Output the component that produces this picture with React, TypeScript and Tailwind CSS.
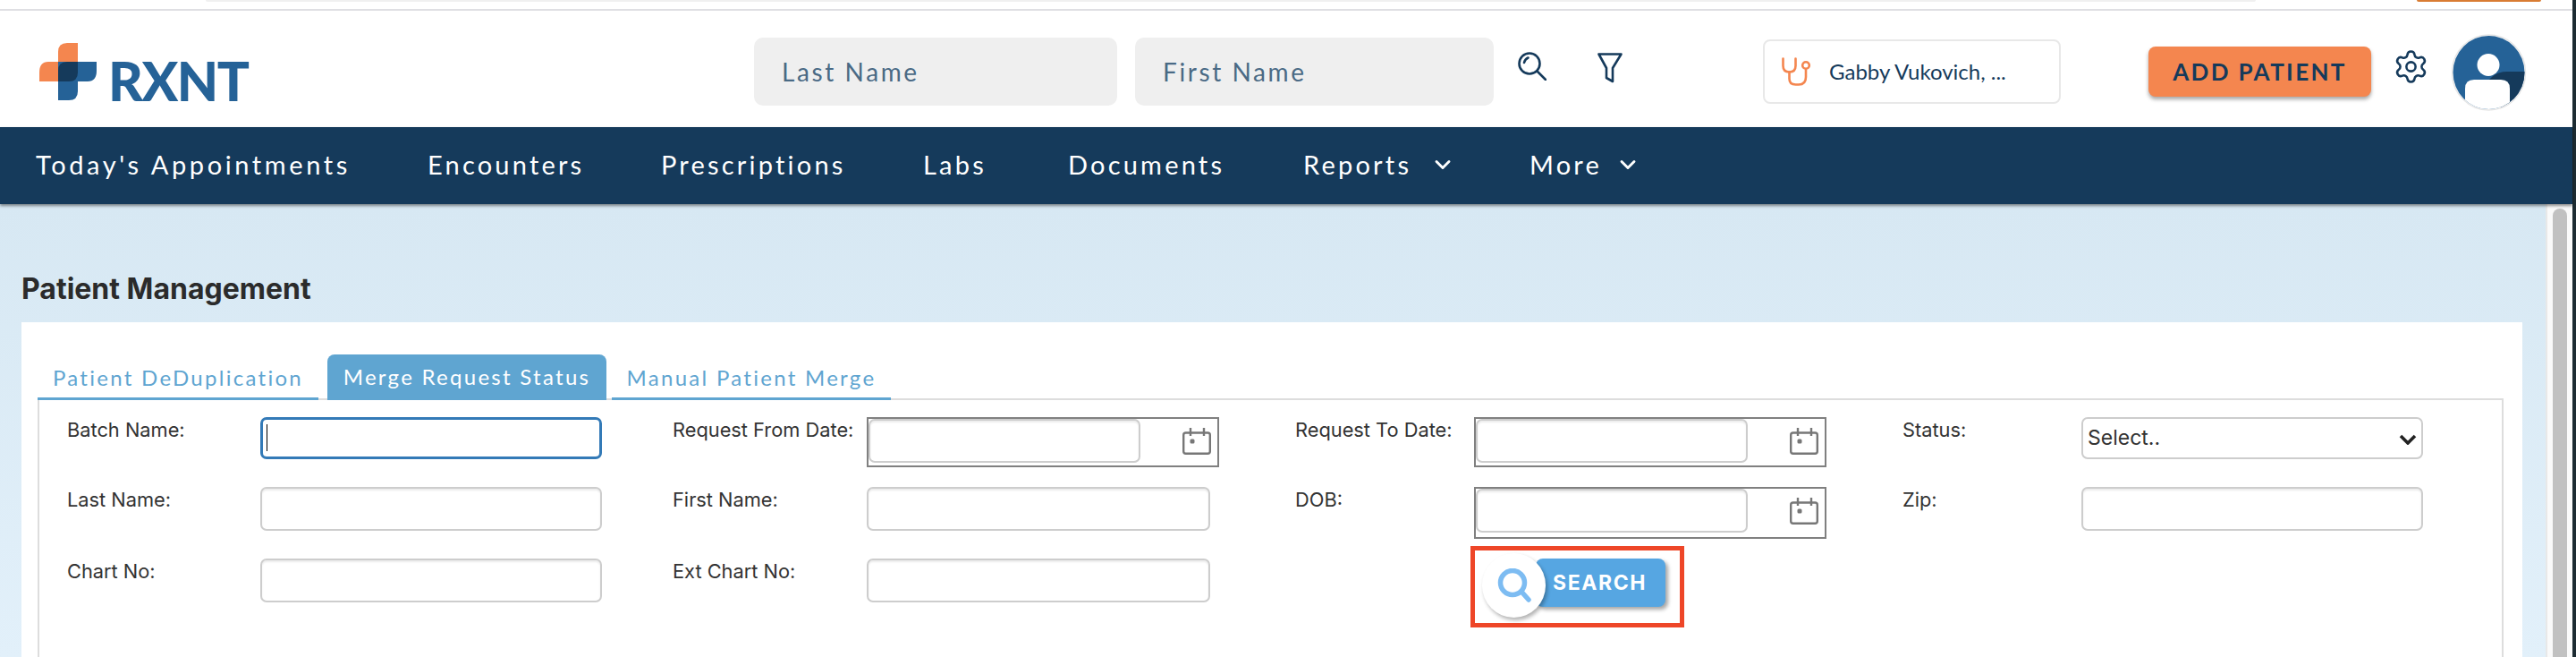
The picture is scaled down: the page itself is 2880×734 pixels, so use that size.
import { Settings, ChevronDown } from "lucide-react";

const navItems = [
    { label: "Today's Appointments", width: "w-[438px]" },
    { label: "Encounters", width: "w-[261px]" },
    { label: "Prescriptions", width: "w-[293px]" },
    { label: "Labs", width: "w-[162px]" },
    { label: "Documents", width: "w-[263px]" },
];

const inputClass =
    "h-[49px] w-full rounded-[7px] border-2 border-[#cdcdcd] bg-white shadow-[inset_0_2px_2px_rgba(0,0,0,0.08)] outline-none";

const Label = ({ text }: { text: string }) => (
    <div className="font-['Inter',sans-serif] text-[21.8px] leading-[29px] text-[#333]">{text}</div>
);

const TextField = ({ width, name }: { width: string; name: string }) => (
    <div className={width}>
        <input aria-label={name} type="text" className={inputClass} />
    </div>
);

const CalendarIcon = () => (
    <svg width="32" height="30" viewBox="0 0 32 30" fill="none" stroke="#777" strokeWidth="2.4" className="mt-[10px] ml-[47px] shrink-0">
        <rect x="1.2" y="5.5" width="29.6" height="23.3" rx="2.5" />
        <path d="M9 0v9M24 0v9" />
        <rect x="8.5" y="12.5" width="5" height="5" rx="1.5" fill="#777" stroke="none" />
    </svg>
);

const DateField = ({ height, name }: { height: string; name: string }) => (
    <div className={`flex w-[394px] items-start border-2 border-[#808080] ${height}`}>
        <input
            aria-label={name}
            type="text"
            className="h-[49px] w-[304px] rounded-[7px] border-2 border-[#cdcdcd] bg-white shadow-[inset_0_2px_2px_rgba(0,0,0,0.08)] outline-none"
        />
        <CalendarIcon />
    </div>
);

const Logo = () => (
    <div className="mt-[36px] ml-[44px] flex h-[64px] w-[236px] shrink-0 items-end">
        <svg width="64" height="64" viewBox="0 0 64 64" className="shrink-0">
            <path d="M43 0V43H0V33Q0 21 10 21H21V10Q21 0 31 0Z" fill="#f4864f" />
            <path d="M21 21H64V31Q64 43 54 43H43V54Q43 64 33 64H21Z" fill="#256297" />
            <path d="M31 21H43V33Q43 43 33 43H21V31Q21 21 31 21Z" fill="#153a5b" />
        </svg>
        <span className="ml-[13px] h-[43px] font-['Lato',sans-serif] text-[60px] leading-[43px] font-black tracking-[-1.5px] text-[#256297]">RXNT</span>
    </div>
);

const Avatar = () => (
    <svg width="84" height="86" viewBox="0 0 84 86" className="mt-[26px] ml-[25px] shrink-0">
        <defs>
            <clipPath id="avatar-clip">
                <ellipse cx="41.5" cy="43" rx="40" ry="41" />
            </clipPath>
        </defs>
        <ellipse cx="41.5" cy="43" rx="41" ry="42" fill="#fff" stroke="#e6e6e6" strokeWidth="1.5" />
        <g clipPath="url(#avatar-clip)">
            <rect width="84" height="86" fill="#256297" />
            <path d="M42 51Q50 42 62 42H84V90H56Z" fill="#153a5b" />
            <circle cx="41" cy="34.5" r="12.5" fill="#fff" />
            <path d="M15 90V61Q15 51 25 51H55Q65 51 65 61V90Z" fill="#fff" />
        </g>
    </svg>
);

const Header = () => (
    <div className="flex h-[130px] items-start bg-white">
        <Logo />
        <input
            aria-label="Last Name"
            placeholder="Last Name"
            className="mt-[30px] ml-[563px] h-[76px] w-[406px] rounded-[10px] bg-[#efefef] pl-[31px] font-['Lato',sans-serif] text-[28px] tracking-[2.6px] text-[#4a6a85] outline-none placeholder:text-[#4a6a85]"
        />
        <input
            aria-label="First Name"
            placeholder="First Name"
            className="mt-[30px] ml-[20px] h-[76px] w-[401px] rounded-[10px] bg-[#efefef] pl-[31px] font-['Lato',sans-serif] text-[28px] tracking-[2.6px] text-[#4a6a85] outline-none placeholder:text-[#4a6a85]"
        />
        <svg width="32" height="32" viewBox="0 0 32 32" fill="none" stroke="#153a5b" strokeWidth="2.6" strokeLinecap="round" className="mt-[46px] ml-[27px] shrink-0">
            <circle cx="13" cy="13" r="11.5" />
            <path d="M21.5 21.5L31 31" />
            <path d="M7 12Q8 8 11.5 6.5" />
        </svg>
        <svg width="28" height="34" viewBox="0 0 28 34" fill="none" stroke="#153a5b" strokeWidth="2.6" strokeLinejoin="round" className="mt-[47px] ml-[57px] shrink-0">
            <path d="M1.5 1.5H26.5L17 17V32L10 28V17Z" />
        </svg>
        <div className="mt-[32px] ml-[157px] flex h-[72px] w-[333px] shrink-0 items-center rounded-[8px] border-2 border-[#e8e8e8] bg-white pl-[19px]">
            <svg width="32" height="32" viewBox="0 0 32 32" fill="none" stroke="#f4864f" strokeWidth="2.6" strokeLinecap="round" className="shrink-0">
                <path d="M1.5 1.5V9.5Q1.5 16.5 8.5 16.5T15.5 9.5V1.5" />
                <path d="M8.5 16.5V24Q8.5 30.5 15.5 30.5H19Q27 30.5 27 22V14" />
                <circle cx="27" cy="9" r="3.8" />
            </svg>
            <span className="ml-[21px] font-['Lato',sans-serif] text-[24px] text-[#153a5b]">Gabby Vukovich, ...</span>
        </div>
        <button className="mt-[40px] ml-[98px] h-[56px] w-[249px] shrink-0 rounded-[8px] bg-[#f4864f] font-['Lato',sans-serif] text-[26px] font-bold tracking-[0.09em] text-[#153a5b] shadow-[0_3px_4px_rgba(0,0,0,0.35)]">
            ADD PATIENT
        </button>
        <Settings size={41} strokeWidth={1.5} color="#153a5b" className="mt-[42px] ml-[24px] shrink-0" />
        <Avatar />
    </div>
);

const Nav = () => (
    <div className="flex h-[86px] items-center bg-[#153a5b] pb-[2px] pl-[40px] font-['Lato',sans-serif] text-[29px] tracking-[3.2px] text-white shadow-[0_2px_3px_rgba(0,0,0,0.45)]">
        {navItems.map((item, i) => (
            <div key={item.label} className={`${item.width} shrink-0 ${i === 0 ? "tracking-[3.6px]" : ""}`}>
                {item.label}
            </div>
        ))}
        <div className="flex w-[253px] shrink-0 items-center">
            Reports
            <ChevronDown size={28} strokeWidth={2.5} className="ml-[21px]" />
        </div>
        <div className="flex items-center">
            More
            <ChevronDown size={28} strokeWidth={2.5} className="ml-[15px]" />
        </div>
    </div>
);

const Tabs = () => (
    <div className="flex h-[51px] items-end border-b-2 border-[#ddd] font-['Lato',sans-serif] text-[24px] tracking-[0.095em]">
        <div className="-mb-[2px] flex h-[51px] w-[314px] items-center justify-center border-b-[3px] border-[#5fa5d1] pt-[4px] text-[#5fa5d1]">
            Patient DeDuplication
        </div>
        <div className="-mb-[2px] ml-[10px] flex h-[51px] w-[312px] items-center justify-center rounded-t-[8px] bg-[#5fa5d1] pb-[2px] text-white">
            Merge Request Status
        </div>
        <div className="-mb-[2px] ml-[6px] flex h-[51px] w-[312px] items-center justify-center border-b-[3px] border-[#5fa5d1] pt-[4px] text-[#5fa5d1]">
            Manual Patient Merge
        </div>
    </div>
);

const SearchButton = () => (
    <button className="-mt-[14px] -ml-[4px] flex h-[91px] w-[239px] items-start border-[5px] border-[#ee4628] bg-white pl-[8px]">
        <div className="z-10 mt-[3px] flex h-[72px] w-[71px] shrink-0 items-center justify-center rounded-full bg-white shadow-[2px_3px_4px_rgba(0,0,0,0.3)]">
            <svg width="38" height="38" viewBox="0 0 38 38" fill="none" stroke="#7dbcf2" strokeWidth="5.5" strokeLinecap="round">
                <circle cx="17" cy="16" r="13.5" />
                <path d="M27 26L35 35" />
            </svg>
        </div>
        <div className="-ml-[11px] mt-[9px] flex h-[54px] w-[145px] shrink-0 items-center rounded-[8px] bg-[#56a6e2] pl-[19px] font-['Inter',sans-serif] text-[23px] font-bold tracking-[0.07em] text-white shadow-[3px_3px_4px_rgba(0,0,0,0.35)]">
            SEARCH
        </div>
    </button>
);

const StatusSelect = () => (
    <div className="relative w-[382px]">
        <select
            aria-label="Status"
            className="h-[47px] w-full appearance-none rounded-[7px] border-2 border-[#cdcdcd] bg-white pl-[5px] font-['Inter',sans-serif] text-[23px] text-[#333] outline-none"
        >
            <option>Select..</option>
        </select>
        <svg width="20" height="12" viewBox="0 0 20 12" fill="none" stroke="#222" strokeWidth="3.6" className="absolute top-[19px] right-[7px]">
            <path d="M2 2L10 10L18 2" />
        </svg>
    </div>
);

const SearchForm = () => (
    <div className="grid h-[300px] grid-cols-[216px_461px_217px_479px_200px_479px_200px_382px] grid-rows-[78px_80px_100px] border-x-2 border-[#ddd] pt-[19px] pl-[31px]">
        <Label text="Batch Name:" />
        <div className="relative w-[382px]">
            <input
                aria-label="Batch Name"
                type="text"
                className="h-[47px] w-full rounded-[7px] border-[3px] border-[#337ab7] bg-white outline-none"
            />
            <span className="absolute top-[8px] left-[7px] h-[30px] w-[1px] bg-black" />
        </div>
        <Label text="Request From Date:" />
        <DateField height="h-[56px]" name="Request From Date" />
        <Label text="Request To Date:" />
        <DateField height="h-[56px]" name="Request To Date" />
        <Label text="Status:" />
        <StatusSelect />

        <Label text="Last Name:" />
        <TextField width="w-[382px]" name="Last Name" />
        <Label text="First Name:" />
        <TextField width="w-[384px]" name="First Name" />
        <Label text="DOB:" />
        <DateField height="h-[58px]" name="DOB" />
        <Label text="Zip:" />
        <TextField width="w-[382px]" name="Zip" />

        <Label text="Chart No:" />
        <TextField width="w-[382px]" name="Chart No" />
        <Label text="Ext Chart No:" />
        <TextField width="w-[384px]" name="Ext Chart No" />
        <div />
        <SearchButton />
    </div>
);

const App = () => {
    return (
        <div className="flex h-[734px] w-[2880px] overflow-hidden bg-[#1d2c33]">
            <div className="flex w-[2876px] flex-col">
                <div className="h-[12px] shrink-0 border-b-2 border-[#dfdfe3] bg-white pl-[230px]">
                    <div className="flex">
                        <div className="h-[2px] w-[2292px] rounded-b bg-[#f0f0f0]" />
                        <div className="ml-[180px] h-[2px] w-[139px] rounded-b bg-[#d97c33]" />
                    </div>
                </div>
                <Header />
                <div className="z-10">
                    <Nav />
                </div>
                <div className="flex flex-1 overflow-hidden">
                    <div className="flex-1 bg-gradient-to-b from-[#d7e8f3] to-[#e2f0fa] pl-[24px] pr-[26px]">
                        <h1 className="flex h-[132px] items-end pb-[13px] font-['Inter',sans-serif] text-[32px] font-bold text-[#2b2b2b]">
                            Patient Management
                        </h1>
                        <div className="h-[400px] bg-white pt-[36px] pr-[21px] pl-[18px]">
                            <Tabs />
                            <SearchForm />
                        </div>
                    </div>
                    <div className="w-[30px] border-l-2 border-[#e8e8e8] bg-[#fafafa] pt-[5px] pl-[6px]">
                        <div className="h-[600px] w-[16px] rounded-full bg-[#c1c1c1]" />
                    </div>
                </div>
            </div>
        </div>
    );
};

export default App;
